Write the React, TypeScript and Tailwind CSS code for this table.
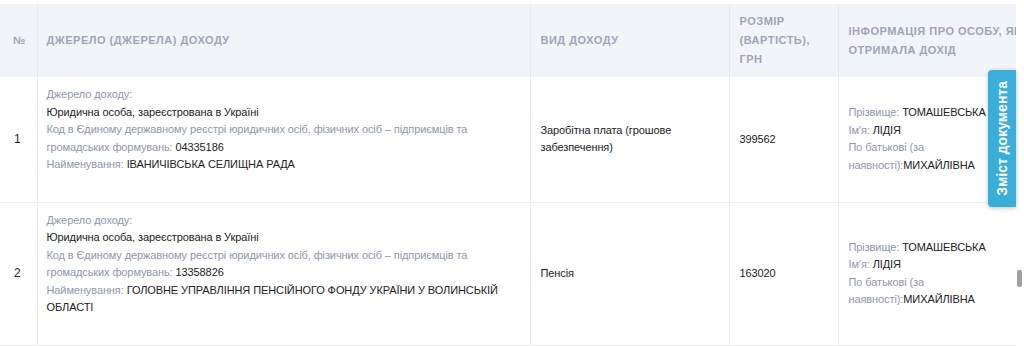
import React from 'react';

const rows = [
  {
    n: '1',
    code: '04335186',
    name: 'ІВАНИЧІВСЬКА СЕЛИЩНА РАДА',
    kind: 'Заробітна плата (грошове забезпечення)',
    amount: '399562',
  },
  {
    n: '2',
    code: '13358826',
    name: 'ГОЛОВНЕ УПРАВЛІННЯ ПЕНСІЙНОГО ФОНДУ УКРАЇНИ У ВОЛИНСЬКІЙ ОБЛАСТІ',
    kind: 'Пенсія',
    amount: '163020',
  },
];

const Label: React.FC<{ children: React.ReactNode }> = ({ children }) => (
  <span className="text-[#8e97ab]">{children}</span>
);

const App: React.FC = () => {
  return (
    <div
      className="relative w-[1024px] h-[346px] overflow-hidden bg-white pt-[4px]"
      style={{ fontFamily: '"Liberation Sans", Arial, sans-serif' }}
    >
      <div className="w-[1016px] overflow-hidden">
        <table className="w-[1048px] table-fixed border-collapse text-[11px] leading-[17.5px] tracking-[-0.1px] text-[#222]">
          <colgroup>
            <col className="w-[37px]" />
            <col className="w-[493px]" />
            <col className="w-[199px]" />
            <col className="w-[109px]" />
            <col className="w-[210px]" />
          </colgroup>
          <thead>
            <tr className="h-[73px] bg-[#f1f5f9] text-left align-middle text-[11px] font-bold uppercase leading-[19px] tracking-[0.5px] text-[#9ca5b6]">
              <th className="pl-[13px] pr-[4px] font-bold normal-case">№</th>
              <th className="border-l border-[#e6ebf1] px-[9px]">Джерело (джерела) доходу</th>
              <th className="border-l border-[#e6ebf1] px-[10px]">Вид доходу</th>
              <th className="border-l border-[#e6ebf1] px-[10px]">Розмір (вартість), грн</th>
              <th className="border-l border-[#e6ebf1] px-[10px]">Інформація про особу, яка отримала дохід</th>
            </tr>
          </thead>
          <tbody>
            {rows.map((r) => (
              <tr key={r.n} className="border-b border-[#e9edf2] align-middle">
                <td className="pl-[14px] py-[10px] text-[12px]">{r.n}</td>
                <td className="border-l border-[#e9edf2] px-[9px] pt-[9px] pb-[28px]">
                  <div><Label>Джерело доходу:</Label></div>
                  <div>Юридична особа, зареєстрована в Україні</div>
                  <div>
                    <Label>
                      Код в Єдиному державному реєстрі юридичних осіб, фізичних осіб – підприємців та громадських
                      формувань:
                    </Label>{' '}
                    {r.code}
                  </div>
                  <div>
                    <Label>Найменування:</Label> {r.name}
                  </div>
                </td>
                <td className="border-l border-[#e9edf2] px-[10px] py-[10px]">
                  <div className="w-[150px]">{r.kind}</div>
                </td>
                <td className="border-l border-[#e9edf2] px-[10px] py-[10px]">{r.amount}</td>
                <td className="border-l border-[#e9edf2] px-[10px] py-[10px]">
                  <div className="w-[150px]">
                    <div>
                      <Label>Прізвище:</Label> ТОМАШЕВСЬКА
                    </div>
                    <div>
                      <Label>Ім'я:</Label> ЛІДІЯ
                    </div>
                    <div>
                      <Label>По батькові (за наявності):</Label>МИХАЙЛІВНА
                    </div>
                  </div>
                </td>
              </tr>
            ))}
          </tbody>
        </table>
      </div>

      {/* side tab */}
      <div className="absolute left-[988px] top-[70px] flex h-[137px] w-[28px] items-center justify-center rounded-l-[4px] bg-[#3aadd8] shadow-[0_1px_4px_rgba(0,0,0,0.25)]">
        <span className="rotate-180 whitespace-nowrap text-[14px] font-bold text-white [writing-mode:vertical-rl]">
          Зміст документа
        </span>
      </div>

      {/* scrollbar thumb */}
      <div className="absolute left-[1017px] top-[270px] h-[17px] w-[5px] rounded-[2px] bg-[#a0a0a0]" />
    </div>
  );
};

export default App;
